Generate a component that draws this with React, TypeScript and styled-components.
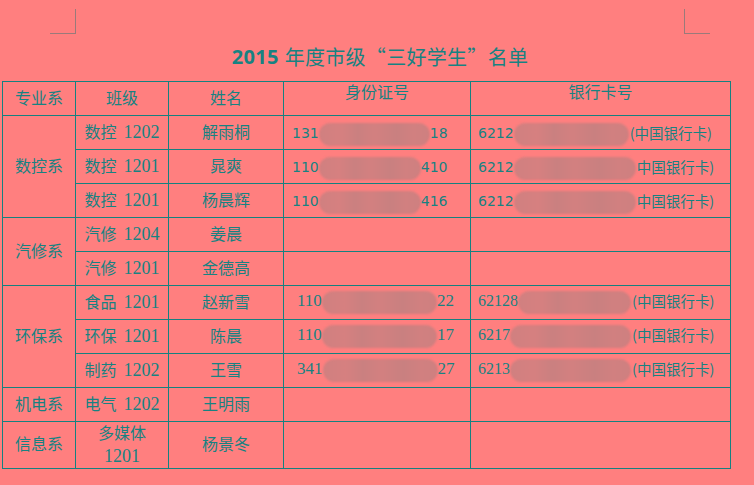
import React from "react";
import styled, { createGlobalStyle } from "styled-components";

const TEXT = "#178282";
const LINE = "#158180";
const CJK = `"Noto Sans CJK SC", "Noto Sans CJK JP", sans-serif`;

const Global = createGlobalStyle`
  html, body { margin: 0; padding: 0; background: #ff7f7f; }
  body { width: 754px; height: 485px; overflow: hidden; font-family: ${CJK}; color: ${TEXT}; }
`;

const Page = styled.div`
  width: 754px;
  height: 485px;
  display: flex;
  flex-direction: column;
`;

const MarkBar = styled.div`
  display: flex;
  justify-content: space-between;
  padding: 9px 44px 0 50px;
  box-sizing: border-box;
  height: 35px;
`;

const Mark = styled.div<{ $side: "left" | "right" }>`
  width: 26px;
  height: 25px;
  box-sizing: border-box;
  border-bottom: 1px solid #9a7a7a;
  ${(p) => (p.$side === "left" ? "border-right: 1px solid #9a7a7a;" : "border-left: 1px solid #9a7a7a;")}
`;

const Title = styled.h1`
  margin: 0;
  height: 46px;
  padding-bottom: 4px;
  box-sizing: border-box;
  display: flex;
  align-items: center;
  justify-content: center;
  padding-left: 6px;
  font-size: 20px;
  font-weight: 400;
  font-family: ${CJK};
  color: ${TEXT};
  letter-spacing: 0.3px;
`;

const Year = styled.span`
  font-family: "Open Sans", "Liberation Sans", sans-serif;
  font-weight: 700;
  font-size: 20px;
  margin-right: 6px;
`;

const Table = styled.table`
  margin-left: 2px;
  border-collapse: collapse;
  table-layout: fixed;
  width: 729px;
`;

const Cell = styled.td<{ $align?: "left" | "center"; $valign?: "top" | "middle"; $h?: number; $pl?: number; $pt?: number }>`
  border: 1px solid ${LINE};
  padding: ${(p) => p.$pt ?? 0}px 0 0 ${(p) => p.$pl ?? 0}px;
  height: ${(p) => p.$h ?? 33}px;
  box-sizing: border-box;
  text-align: ${(p) => p.$align ?? "center"};
  vertical-align: ${(p) => p.$valign ?? "middle"};
  font-family: "Liberation Serif", ${CJK};
  font-size: 16px;
  line-height: 20px;
  color: ${TEXT};
  white-space: nowrap;
`;

const Num = styled.span<{ $size?: number }>`
  font-family: "Liberation Serif", serif;
  font-size: ${(p) => p.$size ?? 18}px;
  margin-left: 7px;
`;

const Wrap = styled.span`
  white-space: normal;
  display: inline-block;
  line-height: 23px;
`;

const Redact = styled.div<{ $serif?: boolean; $size?: number }>`
  display: flex;
  align-items: center;
  font-family: ${(p) => (p.$serif ? `"Liberation Serif", serif` : `"DejaVu Sans", sans-serif`)};
  font-size: ${(p) => p.$size ?? (p.$serif ? 17 : 14)}px;
  line-height: 20px;
`;

const Blob = styled.span<{ $w: number }>`
  display: inline-block;
  width: ${(p) => p.$w}px;
  height: 23px;
  margin-top: 4px;
  border-radius: 12px;
  background: linear-gradient(
    90deg,
    #d08080 0%,
    #d68080 20%,
    #ca8080 35%,
    #d38080 50%,
    #c98080 70%,
    #d18080 85%,
    #ce8080 100%
  );
  filter: blur(1.2px);
`;

const Note = styled.span`
  font-family: ${CJK};
  font-size: 14.5px;
  margin-left: 1px;
`;

type Red = { pre: string; w: number; suf: string };
type Row = {
  dept?: string;
  span?: number;
  cls: string;
  num?: string;
  name: string;
  id?: Red;
  bank?: Red;
  serif?: boolean;
};

const rows: Row[] = [
  { dept: "数控系", span: 3, cls: "数控", num: "1202", name: "解雨桐", id: { pre: "131", w: 111, suf: "18" }, bank: { pre: "6212", w: 115, suf: "(中国银行卡)" } },
  { cls: "数控", num: "1201", name: "晁爽", id: { pre: "110", w: 102, suf: "410" }, bank: { pre: "6212", w: 122, suf: "中国银行卡)" } },
  { cls: "数控", num: "1201", name: "杨晨辉", id: { pre: "110", w: 102, suf: "416" }, bank: { pre: "6212", w: 122, suf: "中国银行卡)" } },
  { dept: "汽修系", span: 2, cls: "汽修", num: "1204", name: "姜晨" },
  { cls: "汽修", num: "1201", name: "金德高" },
  { dept: "环保系", span: 3, cls: "食品", num: "1201", name: "赵新雪", serif: true, id: { pre: "110", w: 115, suf: "22" }, bank: { pre: "62128", w: 113, suf: "(中国银行卡)" } },
  { cls: "环保", num: "1201", name: "陈晨", serif: true, id: { pre: "110", w: 115, suf: "17" }, bank: { pre: "6217", w: 121, suf: "(中国银行卡)" } },
  { cls: "制药", num: "1202", name: "王雪", serif: true, id: { pre: "341", w: 115, suf: "27" }, bank: { pre: "6213", w: 121, suf: "(中国银行卡)" } },
  { dept: "机电系", span: 1, cls: "电气", num: "1202", name: "王明雨" },
];

function RedactedId({ r, serif }: { r: Red; serif?: boolean }) {
  return (
    <Redact $serif={serif}>
      <span>{r.pre}</span>
      <Blob $w={r.w} />
      <span>{r.suf}</span>
    </Redact>
  );
}

function RedactedBank({ r, serif }: { r: Red; serif?: boolean }) {
  return (
    <Redact $serif={serif} $size={serif ? 16 : 14}>
      <span>{r.pre}</span>
      <Blob $w={r.w} />
      <Note>{r.suf}</Note>
    </Redact>
  );
}

export default function App() {
  return (
    <Page>
      <Global />
      <MarkBar>
        <Mark $side="left" />
        <Mark $side="right" />
      </MarkBar>
      <Title>
        <Year>2015</Year>年度市级“三好学生”名单
      </Title>
      <Table>
        <colgroup>
          <col style={{ width: 73 }} />
          <col style={{ width: 93 }} />
          <col style={{ width: 115 }} />
          <col style={{ width: 187 }} />
          <col style={{ width: 260 }} />
        </colgroup>
        <tbody>
          <tr>
            <Cell $h={34}>专业系</Cell>
            <Cell>班级</Cell>
            <Cell>姓名</Cell>
            <Cell $valign="top" $pt={1}>身份证号</Cell>
            <Cell $valign="top" $pt={1}>银行卡号</Cell>
          </tr>
          {rows.map((r, i) => (
            <tr key={i}>
              {r.dept && <Cell rowSpan={r.span}>{r.dept}</Cell>}
              <Cell $h={34}>
                {r.cls}
                <Num>{r.num}</Num>
              </Cell>
              <Cell>{r.name}</Cell>
              <Cell $align="left" $pl={r.serif ? 13 : 8} $valign={r.serif ? "top" : "middle"} $pt={r.serif ? 1 : 0}>
                {r.id && <RedactedId r={r.id} serif={r.serif} />}
              </Cell>
              <Cell $align="left" $pl={7} $valign={r.serif ? "top" : "middle"} $pt={r.serif ? 1 : 0}>
                {r.bank && <RedactedBank r={r.bank} serif={r.serif} />}
              </Cell>
            </tr>
          ))}
          <tr>
            <Cell $h={46}>信息系</Cell>
            <Cell>
              <Wrap>
                多媒体
                <br />
                <Num $size={18} style={{ marginLeft: 0 }}>1201</Num>
              </Wrap>
            </Cell>
            <Cell>杨景冬</Cell>
            <Cell />
            <Cell />
          </tr>
        </tbody>
      </Table>
    </Page>
  );
}
